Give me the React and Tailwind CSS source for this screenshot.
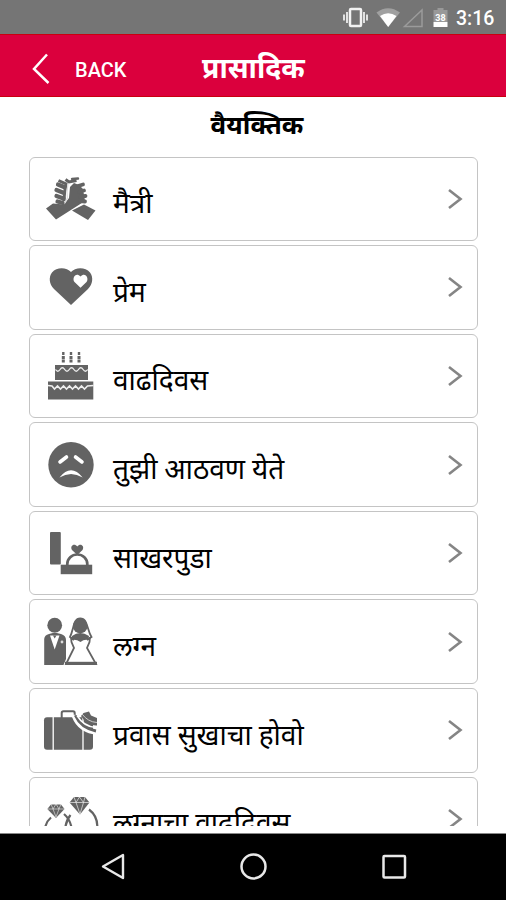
import React from 'react';

const GREY = '#636363';

function HandsIcon() {
  return (
    <g>
      <path d="M6 39.5 L13 34.500 L24 35.500 L29 29 L30 18 L34 14 L39 16 L43 20 L45 32 L16 50.5 Z" fill={GREY} />
      <path d="M32 41.5 L44 35.5 L55.5 41.5 L48 51 Z" fill={GREY} />
      <path d="M18 15.500 L24 18 M16.500 21 L24 24 M16.500 27 L23.500 29.500 M17.500 32.500 L23 34" stroke={GREY} strokeWidth="4.200" strokeLinecap="round" />
      <path d="M18.500 11.500 L26 15 L24.500 24 L24 32" stroke={GREY} strokeWidth="3" fill="none" />
      <path d="M25.500 10.500 L29 13 L36.500 11.500" stroke={GREY} strokeWidth="3" fill="none" />
      <path d="M32 10 L38 9.500" stroke={GREY} strokeWidth="2.400" strokeLinecap="round" />
      <path d="M38 17 L43 15.500 M39 22.5 L44 21.500 M40 27.5 L45.5 27 M40 32 L45 32.500" stroke={GREY} strokeWidth="3.8" strokeLinecap="round" />
      <path d="M28 14.500 L27 23 L27.500 29 L24.500 34.500" stroke="#ddd" strokeWidth="1.200" fill="none" />
    </g>
  );
}

function HeartIcon() {
  return (
    <g>
      <path d="M31 48 L14 32 C9 27 8.500 20 12 15.500 C17 9.500 27 10.500 31 15 C35 10.500 45 9.500 50 15.500 C53.500 20 53 27 48 32 Z" fill={GREY} />
      <path d="M40.500 30.700 L34.500 25 C31.500 21 36 14.500 40.500 19.500 C45 14.500 49.500 21 46.500 25 Z" fill="#fff" />
    </g>
  );
}

function CakeIcon() {
  return (
    <g>
      <path d="M23.300 10 V17 M31 10 V17 M39 10 V17" stroke={GREY} strokeWidth="3" strokeDasharray="3 .6" />
      <path d="M23.300 6 V9 M31 6 V9 M39 6 V9" stroke={GREY} strokeWidth="2.400" />
      <path d="M15 19 H48 V34 H15 Z M8 35.500 H53.300 V53.500 H8 Z" fill={GREY} />
      <path d="M15.500 23.500 q2.300 3.500 4.600 0 t4.600 0 t4.600 0 t4.600 0 t4.600 0 t4.600 0 t4.600 0" stroke="#eee" strokeWidth="1.300" fill="none" />
      <path d="M8 39.500 L12 40 L14.500 43 L17.500 40 L20.500 43 L23.500 40 L26.500 43 L29.500 40 L32.500 43 L35.500 40 L38.500 43 L41.500 40 L44.500 43 L47.500 40 L53.500 39.500" stroke="#eee" strokeWidth="1.600" fill="none" />
    </g>
  );
}

function SadIcon() {
  return (
    <g>
      <circle cx="31" cy="29.700" r="22.700" fill={GREY} />
      <path d="M20 27 L26.500 22 M35.500 22 L42 27" stroke="#fff" strokeWidth="3.600" strokeLinecap="round" />
      <path d="M19.500 42.500 Q31 28 42.700 42.500 Q31 35.500 19.500 42.500 Z" fill="#fff" />
    </g>
  );
}

function RingBoxIcon() {
  return (
    <g>
      <rect x="10" y="9" width="10.800" height="32.500" rx="1" fill={GREY} />
      <rect x="20.700" y="41.700" width="31.500" height="9.500" fill={GREY} />
      <path d="M27.300 42.500 V41 A10 9.500 0 0 1 47.300 41 V42.500" stroke={GREY} strokeWidth="2.700" fill="none" />
      <path d="M37.300 32 L32 27 C29.500 22.500 34.500 19.500 37.300 23.500 C40 19.500 45 22.500 42.500 27 Z" fill={GREY} />
    </g>
  );
}

function CoupleIcon() {
  return (
    <g>
      <circle cx="14.700" cy="13.200" r="7.400" fill={GREY} />
      <path d="M4.200 53 V27 Q4.500 23 9 22 L14.700 20.500 L21 22 Q26 23.500 26 28 V47 L23.500 53 Z" fill={GREY} />
      <path d="M10 23.500 L19.500 23.500 L14.700 37.500 Z" fill="#fff" />
      <path d="M13 23.500 H16.500 L14.700 26.500 Z" fill={GREY} />
      <circle cx="22" cy="30" r="1.400" fill="#ddd" />
      <path d="M40.200 6.500 C33 6.500 34 17 30 25 L34 28 M40.200 6.500 C48 6.500 46.500 17 51.500 25 L47 28" stroke={GREY} strokeWidth="1.800" fill="none" />
      <circle cx="40.200" cy="14" r="7.300" fill={GREY} />
      <path d="M32 24 Q40 18 49 24 L48.500 28 Q44 27 40.500 30 Q36 27 32 28 Z" fill={GREY} />
      <path d="M31 25 L31.500 30 L34 36 L26 52 H56 L47 36 L49.500 30 L50 25" stroke={GREY} strokeWidth="1.800" fill="none" />
      <path d="M25 51.300 H57" stroke={GREY} strokeWidth="3" />
    </g>
  );
}

function SuitcaseIcon() {
  return (
    <g>
      <rect x="4" y="17.300" width="49" height="32.500" rx="3" fill={GREY} />
      <path d="M21.700 18 V13 Q21.700 11.300 23.500 11.300 H33 Q34.700 11.300 34.700 13 V18" stroke={GREY} strokeWidth="2" fill="none" />
      <path d="M13.200 17 V50 M43 17 V50" stroke="#fff" strokeWidth="1.300" />
      <path d="M34 14 Q39 27 58 31 L58 35 Q38 33 32 17 Z" fill="#fff" />
      <path d="M35.500 15.500 Q41 28 56 31" stroke={GREY} strokeWidth="3" fill="none" />
      <path d="M37 15.500 Q44 27 56 27.500" stroke="#fff" strokeWidth="1.500" fill="none" />
      <path d="M41 16 L43.500 13 L49 11.500 L51 15.500 L57 18 L57 25.500 Q47 26 41 16 Z" fill={GREY} />
      <path d="M42 14 Q48 22 57 22.500" stroke="#ccc" strokeWidth="1" fill="none" />
    </g>
  );
}

function RingsIcon() {
  return (
    <g>
      <path d="M11 28.500 Q5.500 33 4.500 42 M24 25 Q31 31 32 42 M30.500 26 Q25.500 32 25 42 M49 20.500 Q59 28 57 42" stroke={GREY} strokeWidth="2.200" fill="none" />
      <path d="M11 15.500 H21 L24.500 20 L16 29 L7.300 20 Z" fill={GREY} />
      <path d="M34 8 H45 L49.500 13.500 L40 25.500 L29.500 13.500 Z" fill={GREY} />
      <path d="M7 20 H25 M11 15 L13 20 L16 28 L19 20 L21 15 M13 20 L16 15 L19 20" stroke="#eee" strokeWidth=".6" fill="none" />
      <path d="M29 13.500 H50 M34 8 L36 13.500 L40 25 L43.500 13.500 L45 8 M36 13.500 L39.500 8 L43.500 13.500" stroke="#eee" strokeWidth=".7" fill="none" />
    </g>
  );
}

const items = [
  { label: 'मैत्री', Icon: HandsIcon },
  { label: 'प्रेम', Icon: HeartIcon },
  { label: 'वाढदिवस', Icon: CakeIcon },
  { label: 'तुझी आठवण येते', Icon: SadIcon },
  { label: 'साखरपुडा', Icon: RingBoxIcon },
  { label: 'लग्न', Icon: CoupleIcon },
  { label: 'प्रवास सुखाचा होवो', Icon: SuitcaseIcon },
  { label: 'लग्नाचा वाढदिवस', Icon: RingsIcon },
];

function StatusBar() {
  return (
    <div className="h-[34px] shrink-0 bg-[#757575] flex items-center justify-end pr-[11px] text-white">
      <svg width="112" height="34" viewBox="0 0 112 34" fill="none">
        {/* vibrate */}
        <rect x="8" y="9" width="11" height="17" rx="1" stroke="#f2f2f2" strokeWidth="2.500" />
        <path d="M5 12 V23 M2 14.500 V20.500 M22 12 V23 M25 14.500 V20.500" stroke="#eee" strokeWidth="1.800" />
        {/* wifi */}
        <path d="M34.500 12.500 Q46 4 58 12.500 L46.200 27 Z" fill="#a0a0a0" />
        <path d="M38 16 Q46 10.500 54.500 16 L46.200 27 Z" fill="#fff" />
        {/* signal */}
        <path d="M62.500 26.500 L80 10 V26.500 Z" stroke="#9b9b9b" strokeWidth="1.500" />
        {/* battery */}
        <path d="M91.500 10 H95.500 V8 H101.500 V10 H105.500 V22 H91.500 Z" fill="#999" />
        <path d="M91.500 22 H105.500 V27 H91.500 Z" fill="#fff" />
        <text x="98.500" y="21" textAnchor="middle" fontSize="9" fontWeight="700" fontFamily="Roboto, sans-serif" fill="#fff">38</text>
      </svg>
      <span className="ml-[2px] mt-[3px] w-[39px] text-[19.500px] font-medium whitespace-nowrap">3:16</span>
    </div>
  );
}

function Header() {
  return (
    <header className="h-[63px] shrink-0 bg-[#db003d] border-y border-[#c9000f] grid grid-cols-[203px_1fr] text-white">
      <div className="flex items-center pl-8 pt-[7px]">
        <svg width="18" height="32" viewBox="0 0 18 32" fill="none">
          <path d="M15 1.500 L2 16 L16.500 30" stroke="#fff" strokeWidth="2.500" />
        </svg>
        <span className="ml-[25px] mt-[2px] text-[20px] font-medium leading-none">BACK</span>
      </div>
      <h1 className="-ml-px pt-[14px] text-[28.300px] leading-[40px] font-bold whitespace-nowrap">प्रासादिक</h1>
    </header>
  );
}

function Row({ label, Icon }) {
  return (
    <li className="h-[84.500px] shrink-0 flex items-center border border-[#c4c4c4] rounded-md bg-white pl-[10px] pr-[14px]">
      <svg width="60" height="60" viewBox="0 0 60 60" fill="none" className="shrink-0">
        <Icon />
      </svg>
      <span className="ml-[13px] mt-[11px] grow text-[28px] leading-[40px] text-black whitespace-nowrap">{label}</span>
      <svg width="16" height="22" viewBox="0 0 16 22" fill="none" className="shrink-0">
        <path d="M2 2 L13.500 11 L2 20" stroke="#858585" strokeWidth="2.600" />
      </svg>
    </li>
  );
}

function NavBar() {
  return (
    <nav className="h-[67px] shrink-0 bg-black border-t border-[#888] flex items-center justify-between pl-[100px] pr-[98px]">
      <svg width="28" height="30" viewBox="0 0 28 30" fill="none">
        <path d="M3 14.500 L23 3 V26 Z" stroke="#e8e8e8" strokeWidth="2.400" strokeLinejoin="round" />
      </svg>
      <svg width="28" height="30" viewBox="0 0 28 30" fill="none">
        <circle cx="13.500" cy="14.500" r="12" stroke="#e8e8e8" strokeWidth="2.500" />
      </svg>
      <svg width="28" height="30" viewBox="0 0 28 30" fill="none">
        <rect x="3.500" y="4" width="21.500" height="21.500" rx="1" stroke="#e8e8e8" strokeWidth="2.500" />
      </svg>
    </nav>
  );
}

function App() {
  return (
    <div lang="mr" className="w-[506px] h-[900px] flex flex-col overflow-hidden bg-white font-['Roboto','Noto_Sans','Noto_Sans_Devanagari',sans-serif]">
      <StatusBar />
      <Header />
      <h2 className="h-[59.500px] shrink-0 pt-[8px] pl-[8px] text-center text-[26px] leading-[40px] font-bold text-black">वैयक्तिक</h2>
      <ul className="h-[669.500px] mx-7 pl-px flex flex-col gap-[4.100px] overflow-hidden">
        {items.map((item) => (
          <Row key={item.label} {...item} />
        ))}
      </ul>
      <div className="h-[7px] shrink-0 bg-white" />
      <NavBar />
    </div>
  );
}

export default App;
